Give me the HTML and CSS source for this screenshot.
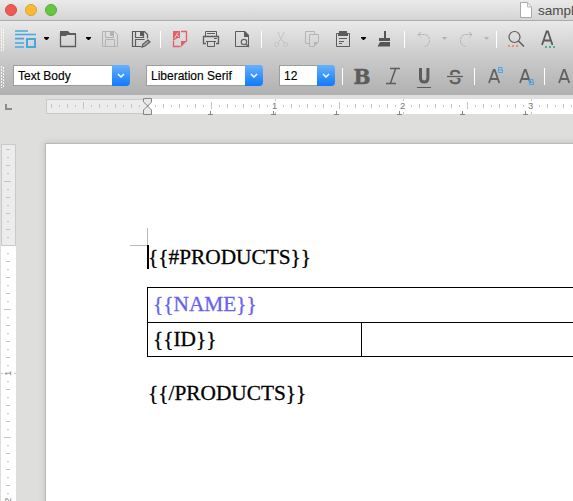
FILE: index.html
```html
<!DOCTYPE html>
<html lang="en">
<head>
<meta charset="utf-8">
<title>sample</title>
<link rel="stylesheet" href="styles.css">
</head>
<body>
<div class="window">
  <header class="titlebar">
    <div class="lights"><i class="close"></i><i class="minimize"></i><i class="expand"></i></div>
    <div class="doc-title">
      <svg width="14" height="18" viewBox="0 0 14 18"><path d="M1.5 1.5h7l4 4.500v10.500h-11z" fill="#fff" stroke="#a9a9a9"/><path d="M8.500 2v4h4" fill="#eee" stroke="#bbb"/></svg>
      <span>sample</span>
    </div>
  </header>

  <div class="toolbars">
    <div class="toolbar standard">
      <svg width="12" viewBox="0 21 12 36"><path class="grip" d="M1.500 28v23M3.500 29v22"/></svg>
      <svg width="28" viewBox="12 21 28 36"><path d="M15 31h13M15 34.500h21M15 38.700h9M15 43h9M15 47h9" stroke="#45a8e0" stroke-width="1.700"/><path d="M27 39h8v8h-8z" fill="none" stroke="#45a8e0" stroke-width="2"/></svg>
      <svg width="16" viewBox="40 21 16 36"><path d="M44 37h5v1l-2 2h-1l-2-2z"/></svg>
      <svg width="24" viewBox="56 21 24 36"><path d="M60 31h8l2 2h6v2H67l-1 1h-6z" fill="#5c5c5c"/><path d="M60.500 33v13.500h15V34" fill="none" stroke="#5c5c5c" stroke-width="1.300"/></svg>
      <svg width="18" viewBox="80 21 18 36"><path d="M86 37h5v1l-2 2h-1l-2-2z"/></svg>
      <svg width="26" viewBox="98 21 26 36"><g fill="none" stroke="#b2b2b2"><path d="M102.500 31.500h12l3 3v12h-15zM105.500 32v5.500h8v-6M105.500 46v-6.500h9V46"/><path d="M110 32h3v4h-3z" fill="#b2b2b2" stroke="none"/></g></svg>
      <svg width="32" viewBox="124 21 32 36"><g fill="none" stroke="#5c5c5c" stroke-width="1.200"><path d="M141 46.500h-8.500v-15h12l3 3v4M135.500 32v5.500h8v-6M135.500 46v-6.500h9"/><path d="M140 32h3v4h-3z" fill="#5c5c5c" stroke="none"/><path d="M142 47l1-3 5-4 2 2-5 4z" fill="#aaa" stroke-width="1.200"/></g></svg>
      <svg width="10" viewBox="156 21 10 36"><path class="sep" d="M160.500 31v17"/></svg>
      <svg width="30" viewBox="166 21 30 36"><path d="M173 31h7v7h-2l-2 1-3 2z" fill="#e0606a"/><path d="M174.500 38.500l1-2 2.500-4M177 35.500l2 1" stroke="#f0d0d0" fill="none"/><path d="M181 31.500h5.500v10M173.500 41v5.500h7" fill="none" stroke="#e0606a" stroke-width="1.300"/><path d="M181 41h6l-6 6z" fill="#e0606a"/></svg>
      <svg width="32" viewBox="196 21 32 36"><g fill="none" stroke="#5c5c5c"><path d="M205.500 36v-4.500h11V36M207 33.500h8" /><path d="M206 43.500h-2.500v-7h15v7H216" stroke-width="1.300"/><path d="M206 41.500h10M207.500 42v4.500h7V42M214 38.500h3"/></g></svg>
      <svg width="29" viewBox="228 21 29 36"><path d="M245 31.500h-9.500v15h13V36" fill="none" stroke="#5c5c5c"/><path d="M244 31h1l4 4v2h-5z" fill="#5c5c5c"/><circle cx="244" cy="42" r="2.700" fill="#ddd" stroke="#666" stroke-width="1.200"/><path d="M246 44l3 3" stroke="#666" stroke-width="1.500"/></svg>
      <svg width="9" viewBox="257 21 9 36"><path class="sep" d="M261.500 31v17"/></svg>
      <svg width="31" viewBox="266 21 31 36"><g fill="none" stroke="#b9b9b9" stroke-dasharray="1.500 .7"><path d="M278 32l2 5 4 6M284 32l-2 5-4 6"/><circle cx="276.500" cy="44.500" r="2"/><circle cx="285.500" cy="44.500" r="2"/></g></svg>
      <svg width="31" viewBox="297 21 31 36"><g fill="none" stroke="#b5b5b5"><path d="M309 43.500h-3.500v-12h9v3"/><path d="M314 46.500h-4.500v-12h9V42"/><path d="M314 42h5l-5 5z" fill="#b5b5b5" stroke="none"/></g></svg>
      <svg width="29" viewBox="328 21 29 36"><path d="M336.500 33.500h13v13h-13z" fill="none" stroke="#5c5c5c"/><path d="M339 31h8v5h-8zM338 33h10v3h-10z" fill="#5c5c5c"/><path d="M339 38.500h8M339 41.500h5M339 43.500h3" stroke="#5c5c5c"/></svg>
      <svg width="15" viewBox="357 21 15 36"><path d="M361 37h5v1l-2 2h-1l-2-2z"/></svg>
      <svg width="28" viewBox="372 21 28 36"><path d="M384 31h2v7h4v3h-11v-3h5zM380 42h10v4.500h-12.500z" fill="#555"/></svg>
      <svg width="8" viewBox="400 21 8 36"><path class="sep" d="M404.500 31v17"/></svg>
      <svg width="31" viewBox="408 21 31 36"><g class="history"><path d="M421 32l-3 2.500 3 3M418 34.500h6q5 0 5.500 6 0 5-5 6"/></g></svg>
      <svg width="13" viewBox="439 21 13 36"><path d="M442 37h5l-2.500 3z" fill="#b2b2b2"/></svg>
      <svg width="29" viewBox="452 21 29 36"><g class="history"><path d="M469 32l3 2.500-3 3M472 34.500h-6q-5 0-5.500 6 0 5 5 6"/></g></svg>
      <svg width="11" viewBox="481 21 11 36"><path d="M484 37h5l-2.500 3z" fill="#b2b2b2"/></svg>
      <svg width="10" viewBox="492 21 10 36"><path class="sep" d="M496.500 31v17"/></svg>
      <svg width="30" viewBox="502 21 30 36"><circle cx="514.500" cy="37" r="5.500" fill="none" stroke="#5c5c5c" stroke-width="1.200"/><path d="M518.500 41l5.500 5.500" stroke="#5c5c5c" stroke-width="1.500"/><path d="M508 46h10" stroke="#ef8e6c" stroke-width="2" stroke-dasharray="2 2"/></svg>
      <svg width="41" viewBox="532 21 41 36"><path d="M542 45l4.600-13.500h1.300l4.600 13.500M543.500 40.500h7.500" fill="none" stroke="#5c5c5c" stroke-width="1.800"/><path d="M545 47h10" stroke="#45b883" stroke-width="2" stroke-dasharray="2 2"/></svg>
    </div>

    <div class="toolbar formatting">
      <svg width="13" viewBox="0 57 13 38"><path class="grip" d="M1.500 66v22M3.500 67v21"/></svg>
      <div class="combo"><span>Text Body</span><b><svg viewBox="0 0 18 21"><path d="M6 9l3 3 3-3"/></svg></b></div>
      <div class="combo font"><span>Liberation Serif</span><b><svg viewBox="0 0 18 21"><path d="M6 9l3 3 3-3"/></svg></b></div>
      <div class="combo size"><span>12</span><b><svg viewBox="0 0 18 21"><path d="M6 9l3 3 3-3"/></svg></b></div>
      <svg width="15" viewBox="335 57 15 38"><path class="sep" d="M342.500 68v17"/></svg>
      <svg width="28" viewBox="350 57 28 38"><text class="letter bold" x="353.500" y="84" textLength="17" lengthAdjust="spacingAndGlyphs">B</text></svg>
      <svg width="32" viewBox="378 57 32 38"><path d="M390 68.500h10M386 83.500h10M395.500 69l-5 14" fill="none" stroke="#5c5c5c" stroke-width="1.500"/></svg>
      <svg width="31" viewBox="410 57 31 38"><path d="M420.500 68v10q0 4 3.700 4t3.700-4V68" fill="none" stroke="#5c5c5c" stroke-width="3"/><path d="M417 87.500h14" stroke="#5c5c5c"/></svg>
      <svg width="29" viewBox="441 57 29 38"><text class="letter strike" x="449" y="83.500" textLength="12" lengthAdjust="spacingAndGlyphs">S</text><path d="M447 76.500h16" stroke="#bababa" stroke-width="3"/><path d="M447 76.500h16" stroke="#5c5c5c" stroke-width="1.200"/></svg>
      <svg width="10" viewBox="470 57 10 38"><path class="sep" d="M474.500 68v17"/></svg>
      <svg width="31" viewBox="480 57 31 38"><path class="cap" d="M489 83l4.700-13h1l4.600 13M490.500 79h7.500"/><path class="mini" d="M498.500 67.500h3.500v2.500h-3.500zM498.500 70v2.500h4V70"/></svg>
      <svg width="29" viewBox="511 57 29 38"><path class="cap" d="M520 83l4.700-13h1l4.600 13M521.500 79h7.500"/><path class="mini" d="M529.500 79.500h3.500v2.500h-3.500zM529.500 82v2.500h4V82"/></svg>
      <svg width="10" viewBox="540 57 10 38"><path class="sep" d="M544.500 68v17"/></svg>
      <svg width="23" viewBox="550 57 23 38"><path class="cap" d="M559 83l4.700-13h1l4.600 13M560.500 79h7.500"/></svg>
    </div>
  </div>

  <main class="workspace">
    <svg class="hruler" width="573" height="48" viewBox="0 95 573 48">
      <defs><pattern id="inch" x="147" y="99" width="128" height="16" patternUnits="userSpaceOnUse"><path d="M8.500 6v2M24.500 6v2M40.500 6v2M56.500 6v2M72.500 6v2M88.500 6v2M104.500 6v2M120.500 6v2M16.500 5v4M32.500 5v4M48.500 5v4M80.500 5v4M96.500 5v4M112.500 5v4M64.500 3v7" stroke="#c4c4c4"/></pattern></defs>
      <path d="M5 104h2v4h5v2H5z" fill="#8c8c8c"/>
      <path d="M147 99h426v15H147z" fill="#fff"/>
      <path d="M46.500 99.500h101v14h-101z" fill="#ececec" stroke="#c9c9c9"/>
      <path d="M50 99h523v15H50z" fill="url(#inch)"/>
      <path d="M275.500 99v2M275.500 112v2M403.500 99v2M403.500 112v2M531.500 99v2M531.500 112v2" stroke="#c4c4c4"/>
      <path d="M208 114.500h5M210.500 111v4M271 114.500h5M273.500 111v4M334 114.500h5M336.500 111v4M397 114.500h5M399.500 111v4M460 114.500h5M462.500 111v4M523 114.500h5M525.500 111v4" stroke="#858585"/>
      <g class="numbers"><text x="272" y="109">1</text><text x="400" y="109">2</text><text x="528" y="109">3</text></g>
      <path d="M143.500 98.500h8v3.500l-3.500 4-4.500-4zM147.500 106l4 4v4.500h-8V110z" fill="#e8e8e8" stroke="#858585"/>
    </svg>
    <svg class="vruler" width="45" height="358" viewBox="0 143 45 358">
      <defs><pattern id="vinch" x="1" y="245" width="15" height="128" patternUnits="userSpaceOnUse"><path d="M6 8.500h2M6 24.500h2M6 40.500h2M6 56.500h2M6 72.500h2M6 88.500h2M6 104.500h2M6 120.500h2M5 16.500h4M5 32.500h4M5 48.500h4M5 80.500h4M5 96.500h4M5 112.500h4M3 64.500h7" stroke="#c4c4c4"/></pattern></defs>
      <path d="M1 245h15v256H1z" fill="#fff"/>
      <path d="M1.500 144.500h14v101h-14z" fill="#ececec" stroke="#c9c9c9"/>
      <path d="M1 148h15v353H1z" fill="url(#vinch)"/>
      <path d="M1 373.500h2M14 373.500h2" stroke="#c4c4c4"/>
      <g class="numbers"><text transform="translate(11 376) rotate(-90)">1</text><text transform="translate(11 503) rotate(-90)">2</text></g>
    </svg>
    <article class="page">
      <svg class="margin-mark" width="20" height="41" viewBox="130 228 20 41"><path d="M147.500 228v17.500H130" fill="none" stroke="#b9b9b9"/><path d="M147 245h2v24h-2z"/></svg>
      <p>{{#PRODUCTS}}</p>
      <table>
        <tr><td colspan="2" class="field">{{NAME}}</td></tr>
        <tr class="last"><td class="id">{{ID}}</td><td></td></tr>
      </table>
      <p class="end">{{/PRODUCTS}}</p>
    </article>
  </main>
</div>
</body>
</html>
```
FILE: styles.css
```css
* { box-sizing: border-box; }
body { margin: 0; overflow: hidden; background: #dededd; font-family: "Liberation Sans", Arial, sans-serif; }
svg { display: block; flex: none; }
.window { width: 573px; height: 501px; overflow: hidden; }

.titlebar { height: 21px; display: flex; justify-content: space-between; background: linear-gradient(#ebebeb, #d4d4d4); border-bottom: 1px solid #ababab; }
.lights { display: flex; gap: 8px; padding: 4px 0 0 5px; }
.lights i { width: 12px; height: 12px; border-radius: 50%; border: 1px solid; }
.lights .close { background: #f15a53; border-color: #da4a43; }
.lights .minimize { background: #fabb33; border-color: #dba02e; }
.lights .expand { background: #64c93f; border-color: #52ad34; }
.doc-title { width: 54px; display: flex; gap: 5px; padding-top: 1px; overflow: hidden; font: 13.5px/19px "Liberation Sans", Arial, sans-serif; color: #4a4a4a; white-space: nowrap; }

.toolbars { height: 74px; background: linear-gradient(#e9e9e9, #cbcbcb 48%, #b0b0b0); }
.toolbar { display: flex; }
.standard { height: 36px; }
.formatting { height: 38px; }
.standard > svg { height: 36px; }
.formatting > svg { height: 38px; }
.grip { stroke: #f8f8f8; stroke-width: 1; stroke-dasharray: 2 1; fill: none; }
.sep { stroke: #fff; }
.history path { fill: none; stroke: #b3b3b3; stroke-dasharray: 3 .6; }
.combo { width: 117px; height: 21px; margin-top: 8px; display: flex; justify-content: space-between; background: #fff; border: 1px solid #9d9d9d; border-right: 0; border-radius: 0 4px 4px 0; font-size: 12px; line-height: 20px; color: #000; -webkit-text-stroke: .15px #000; }
.combo span { padding-left: 4px; white-space: nowrap; }
.combo b { width: 18px; height: 21px; margin-top: -1px; border-radius: 0 4px 4px 0; background: linear-gradient(#67b1fb, #1079fb); }
.combo path { fill: none; stroke: #fff; stroke-width: 1.5; }
.font { margin-left: 16px; }
.size { margin-left: 16px; width: 56px; }
.letter { fill: #5c5c5c; }
.bold { font: bold 21px "DejaVu Serif", serif; stroke: #5c5c5c; stroke-width: .5; }
.strike { font: 20px "Liberation Sans", sans-serif; stroke: #5c5c5c; stroke-width: .6; }
.cap { fill: none; stroke: #626262; stroke-width: 1.8; }
.mini { fill: none; stroke: #3ca5f4; stroke-width: 1; }

.workspace { height: 406px; display: grid; grid-template: 48px 358px / 45px 528px; }
.hruler { grid-column: 1 / 3; }
.numbers { font: 9.5px "Liberation Sans", Arial, sans-serif; fill: #777; }
.page { position: relative; height: 400px; width: 700px; padding: 101px 0 0 102px; background: #fff; border: 1px solid #b9b9b9; box-shadow: 0 0 7px rgba(0, 0, 0, .14); font: 21.33px/24px "Liberation Serif", "Times New Roman", serif; color: #000; -webkit-text-stroke: .3px currentColor; }
.margin-mark { position: absolute; left: 84px; top: 84px; }
.page p { margin: 0; }
.page table { width: 620px; height: 70px; margin: 18px 0 0 -1px; border-collapse: collapse; }
.page td { height: 35px; padding: 0 5px 2px; border: 1px solid #000; }
.page .last td { height: 34px; }
.page .id { width: 214px; }
.page .field { color: #6860f4; -webkit-text-stroke-color: #6860f4; }
.page .end { margin-top: 24px; }
```
